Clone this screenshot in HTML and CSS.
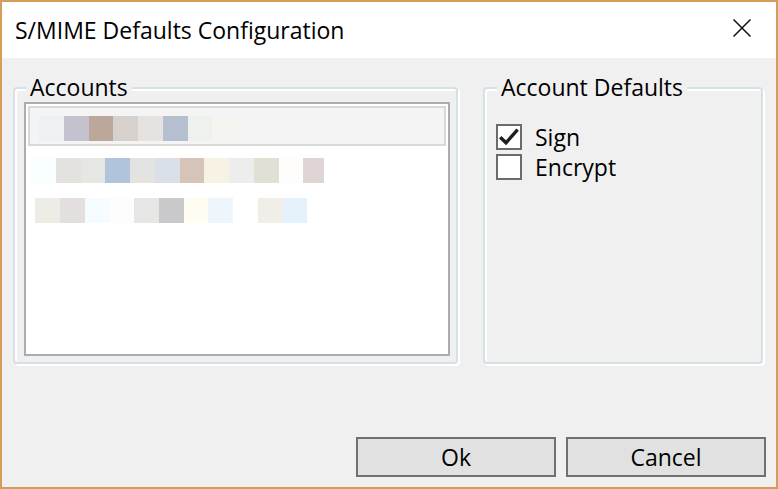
FILE: index.html
```html
<!DOCTYPE html>
<html lang="en">
<head>
<meta charset="utf-8">
<title>S/MIME Defaults Configuration</title>
<link rel="stylesheet" href="styles.css">
</head>
<body>
<div class="window">
  <div class="titlebar">
    <div class="title">S/MIME Defaults Configuration</div>
    <svg class="close" width="18" height="18" viewBox="0 0 18 18" aria-label="Close">
      <path d="M0.5 0.5 L17.5 17.5 M17.5 0.5 L0.5 17.5" stroke="#111" stroke-width="1.5" fill="none"/>
    </svg>
  </div>
  <div class="content">
    <div class="groups">
      <fieldset class="group accounts">
        <legend>Accounts</legend>
        <div class="listbox">
          <div class="row selected">
            <span class="px" style="background:#eef1f4"></span><span class="px" style="background:#c4c2cf"></span><span class="px" style="background:#bba89a"></span><span class="px" style="background:#d7d1cd"></span><span class="px" style="background:#e6e2df"></span><span class="px" style="background:#b5bfcf"></span><span class="px" style="background:#eef1ee"></span><span class="px" style="background:#f5f4ee"></span>
          </div>
          <div class="row r2">
            <span class="px" style="background:#f9ffff"></span><span class="px" style="background:#e3e2df"></span><span class="px" style="background:#e6e7e2"></span><span class="px" style="background:#b0c5dc"></span><span class="px" style="background:#e3e3e1"></span><span class="px" style="background:#d9e0e8"></span><span class="px" style="background:#d6c4b8"></span><span class="px" style="background:#f8f2e4"></span><span class="px" style="background:#ededed"></span><span class="px" style="background:#e0e0d5"></span><span class="px" style="background:#fefdfb"></span><span class="px narrow" style="background:#dfd5d4"></span>
          </div>
          <div class="row r3">
            <span class="px" style="background:#edede6"></span><span class="px" style="background:#e3dfde"></span><span class="px" style="background:#f4fcff"></span><span class="px" style="background:#fdfdfd"></span><span class="px" style="background:#e6e6e4"></span><span class="px" style="background:#c9c9cb"></span><span class="px" style="background:#fffcf2"></span><span class="px" style="background:#eef6fd"></span><span class="px" style="background:#ffffff"></span><span class="px" style="background:#f0eee6"></span><span class="px" style="background:#e6f2fb"></span>
          </div>
        </div>
      </fieldset>
      <fieldset class="group defaults">
        <legend>Account Defaults</legend>
        <div class="options">
          <label class="option">
            <span class="box">
              <svg width="22" height="22" viewBox="0 0 22 22"><path d="M2.2 11.2 L8 16.8 L19.6 3.6" stroke="#1e1e1e" stroke-width="3.4" fill="none" stroke-linejoin="miter"/></svg>
            </span>
            <span class="text">Sign</span>
          </label>
          <label class="option">
            <span class="box"></span>
            <span class="text">Encrypt</span>
          </label>
        </div>
      </fieldset>
    </div>
    <div class="footer">
      <button class="btn">Ok</button>
      <button class="btn">Cancel</button>
    </div>
  </div>
</div>
</body>
</html>
```
FILE: styles.css
```css
* { box-sizing: border-box; }
html, body {
  margin: 0;
  padding: 0;
  width: 778px;
  height: 489px;
  overflow: hidden;
  background: #f0f0f0;
}
body {
  font-family: "Open Sans", "Noto Sans", "Liberation Sans", sans-serif;
  color: #000;
}
.window {
  width: 778px;
  height: 489px;
  border: 2px solid #d59c5a;
  display: flex;
  flex-direction: column;
}
.titlebar {
  height: 56px;
  background: #fff;
  display: flex;
  align-items: center;
  justify-content: space-between;
  padding: 0 25px 0 13px;
  flex: none;
}
.title {
  font-size: 23px;
  line-height: 30px;
}
.close {
  display: block;
  align-self: flex-start;
  margin-top: 17px;
}
.content {
  flex: 1;
  background: #f0f0f0;
  display: flex;
  flex-direction: column;
  padding: 17px 10px 10px 11px;
}
.groups {
  display: flex;
  gap: 25px;
  align-items: stretch;
}
.group {
  margin: 0;
  min-width: 0;
  border: 2px solid #d6e0e7;
  border-radius: 4px;
  box-shadow: inset 2px 2px 0 #fff, 2px 2px 0 #fff;
}
.group legend {
  font-size: 23px;
  line-height: 24px;
  padding: 0 4px 2px 4px;
  background: #f0f0f0;
}
.accounts {
  width: 445px;
  padding: 1px 6px 6px 9px;
}
.accounts legend { margin-left: 2px; }
.defaults {
  width: 280px;
  padding: 21px 8px 6px 11px;
}
.defaults legend { margin-left: 1px; }
.listbox {
  height: 254px;
  border: 2px solid #acacb2;
  background: #fff;
  padding: 2px;
}
.row {
  height: 40px;
  display: flex;
  align-items: flex-start;
  padding-top: 12px;
}
.row.selected {
  background: #f4f4f4;
  border: 2px solid #d9d9d9;
  padding-top: 8px;
  padding-left: 9px;
}
.row.r2 { padding-left: 3px; }
.row.r3 { padding-left: 7px; }
.px {
  display: block;
  width: 24.75px;
  height: 25px;
  flex: none;
}
.px.narrow { width: 21px; }
.options {
  display: flex;
  flex-direction: column;
}
.option {
  height: 30px;
  display: flex;
  align-items: center;
  gap: 13px;
}
.box {
  width: 26px;
  height: 26px;
  border: 2px solid #6b6b6b;
  background: #fff;
  display: flex;
  align-items: center;
  justify-content: center;
  flex: none;
}
.box svg { display: block; }
.text {
  font-size: 23px;
  line-height: 30px;
}
.footer {
  margin-top: auto;
  display: flex;
  justify-content: flex-end;
  gap: 10px;
}
.btn {
  width: 200px;
  height: 40px;
  border: 2px solid #707070;
  background: #e1e1e1;
  font-family: inherit;
  font-size: 23px;
  color: #000;
  padding: 0;
  margin: 0;
  border-radius: 0;
}
```
